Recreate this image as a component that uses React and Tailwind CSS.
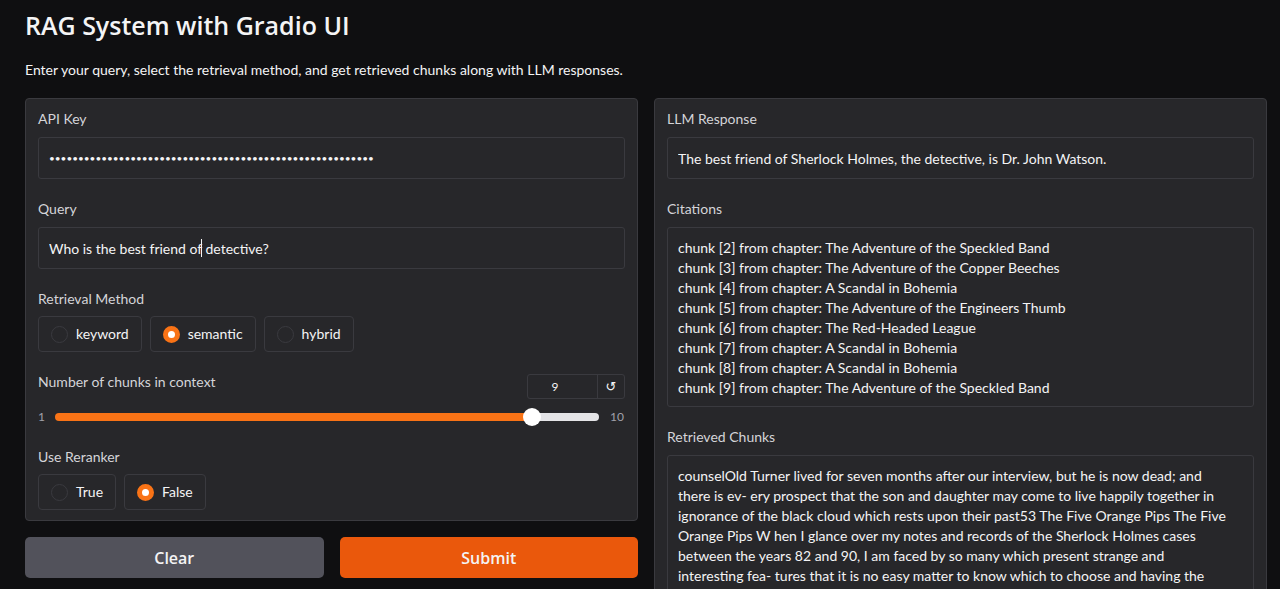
import { useState } from "react";

const citations = [
  "chunk [2] from chapter: The Adventure of the Speckled Band",
  "chunk [3] from chapter: The Adventure of the Copper Beeches",
  "chunk [4] from chapter: A Scandal in Bohemia",
  "chunk [5] from chapter: The Adventure of the Engineers Thumb",
  "chunk [6] from chapter: The Red-Headed League",
  "chunk [7] from chapter: A Scandal in Bohemia",
  "chunk [8] from chapter: A Scandal in Bohemia",
  "chunk [9] from chapter: The Adventure of the Speckled Band",
].join("\n");

const retrieved = [
  "counselOld Turner lived for seven months after our interview, but he is now dead; and",
  "there is ev- ery prospect that the son and daughter may come to live happily together in",
  "ignorance of the black cloud which rests upon their past53 The Five Orange Pips The Five",
  "Orange Pips W hen I glance over my notes and records of the Sherlock Holmes cases",
  "between the years 82 and 90, I am faced by so many which present strange and",
  "interesting fea- tures that it is no easy matter to know which to choose and having the",
].join("\n");

const box =
  "block w-full resize-none overflow-hidden rounded-[3px] border border-[#3a3a3f] bg-[#27272a] px-[10px] leading-5 text-zinc-100 outline-none";

function Field({ id, label, children }) {
  return (
    <div>
      <label htmlFor={id} className="mb-2 block text-[14px] leading-5 text-zinc-300">
        {label}
      </label>
      {children}
    </div>
  );
}

function Choices({ legend, name, options, value, onChange }) {
  return (
    <fieldset>
      <legend className="mb-[7px] text-[14px] leading-5 text-zinc-300">{legend}</legend>
      <div className="flex flex-wrap gap-2">
        {options.map((option) => (
          <label
            key={option}
            className="flex h-9 items-center gap-2 rounded-[4px] border border-[#3a3a3f] px-3 text-[14px] leading-5 text-zinc-100"
          >
            <input
              type="radio"
              name={name}
              checked={value === option}
              onChange={() => onChange(option)}
              className="size-[17px] appearance-none rounded-full border border-[#3a3a3f] checked:border-[5px] checked:border-[#f97316] checked:bg-white"
            />
            {option}
          </label>
        ))}
      </div>
    </fieldset>
  );
}

export default function App() {
  const [apiKey, setApiKey] = useState("x".repeat(56));
  const [query, setQuery] = useState("Who is the best friend of detective?");
  const [method, setMethod] = useState("semantic");
  const [rerank, setRerank] = useState("False");
  const [count, setCount] = useState(9);
  const percent = ((count - 1) / 9) * 100;

  return (
    <main className="h-screen overflow-hidden bg-[#0f0f11] pr-[13px] pl-[25px] font-['Lato','Open_Sans',sans-serif] text-zinc-100">
      <h1 className="pt-[9px] font-['Open_Sans',sans-serif] text-[25px] leading-8 font-semibold">
        RAG System with Gradio UI
      </h1>
      <p className="mt-[19px] text-[14px] leading-5">
        Enter your query, select the retrieval method, and get retrieved chunks along with LLM responses.
      </p>
      <div className="mt-[18px] grid grid-cols-2 items-start gap-4">
        <section>
          <form
            id="query-form"
            onSubmit={(e) => e.preventDefault()}
            className="flex flex-col gap-5 rounded-[4px] border border-[#3a3a3f] bg-[#27272a] px-3 py-[10px]"
          >
            <Field id="api-key" label="API Key">
              <input
                id="api-key"
                type="password"
                autoComplete="off"
                value={apiKey}
                onChange={(e) => setApiKey(e.target.value)}
                className={`${box} h-[42px] text-[10px]`}
              />
            </Field>
            <Field id="query" label="Query">
              <div className="relative">
                <input
                  id="query"
                  type="text"
                  value={query}
                  onChange={(e) => setQuery(e.target.value)}
                  className={`${box} h-[42px] text-[14px]`}
                />
                <span className="absolute top-3 left-[163px] h-[18px] w-px bg-zinc-100" />
              </div>
            </Field>
            <Choices
              legend="Retrieval Method"
              name="method"
              options={["keyword", "semantic", "hybrid"]}
              value={method}
              onChange={setMethod}
            />
            <div>
              <div className="flex items-start justify-between">
                <label htmlFor="chunks" className="text-[14px] leading-5 text-zinc-300">
                  Number of chunks in context
                </label>
                <div className="mt-[2px] flex h-[25px] rounded-[3px] border border-[#3a3a3f]">
                  <input
                    type="number"
                    aria-label="Number of chunks value"
                    min="1"
                    max="10"
                    value={count}
                    onChange={(e) => setCount(Number(e.target.value))}
                    className="w-[69px] [appearance:textfield] bg-transparent text-center text-[12px] outline-none"
                  />
                  <button
                    type="button"
                    aria-label="Reset to default"
                    onClick={() => setCount(9)}
                    className="w-[27px] border-l border-[#3a3a3f] font-['DejaVu_Sans',sans-serif] text-[13px] leading-5"
                  >
                    ↺
                  </button>
                </div>
              </div>
              <div className="mt-2 flex h-5 items-center text-[12px] text-[#a1a1aa]">
                <span className="w-[17px]">1</span>
                <input
                  id="chunks"
                  type="range"
                  min="1"
                  max="10"
                  value={count}
                  onChange={(e) => setCount(Number(e.target.value))}
                  style={{
                    backgroundImage: `linear-gradient(to right, #f97316 ${percent}%, #e4e4e7 ${percent}%)`,
                  }}
                  className="h-2 min-w-0 flex-1 appearance-none rounded-full [&::-webkit-slider-thumb]:size-[18px] [&::-webkit-slider-thumb]:appearance-none [&::-webkit-slider-thumb]:rounded-full [&::-webkit-slider-thumb]:bg-white"
                />
                <span className="w-[26px] pl-[11px]">10</span>
              </div>
            </div>
            <Choices
              legend="Use Reranker"
              name="rerank"
              options={["True", "False"]}
              value={rerank}
              onChange={setRerank}
            />
          </form>
          <div className="mt-4 grid grid-cols-2 gap-4 font-['Open_Sans',sans-serif] text-[16px] leading-6 font-semibold">
            <button type="button" onClick={() => setQuery("")} className="h-[41px] rounded-[5px] bg-[#52525b]">
              Clear
            </button>
            <button type="submit" form="query-form" className="h-[41px] rounded-[5px] bg-[#ea580c]">
              Submit
            </button>
          </div>
        </section>
        <section className="flex flex-col gap-5 rounded-[4px] border border-[#3a3a3f] bg-[#27272a] px-3 py-[10px]">
          <Field id="response" label="LLM Response">
            <input
              id="response"
              type="text"
              readOnly
              value="The best friend of Sherlock Holmes, the detective, is Dr. John Watson."
              className={`${box} h-[42px] text-[14px]`}
            />
          </Field>
          <Field id="citations" label="Citations">
            <textarea
              id="citations"
              readOnly
              rows={8}
              value={citations}
              className={`${box} pt-[10px] pb-2 text-[14px]`}
            />
          </Field>
          <Field id="retrieved" label="Retrieved Chunks">
            <textarea
              id="retrieved"
              readOnly
              rows={12}
              value={retrieved}
              className={`${box} pt-[10px] pb-2 text-[14px]`}
            />
          </Field>
        </section>
      </div>
    </main>
  );
}
